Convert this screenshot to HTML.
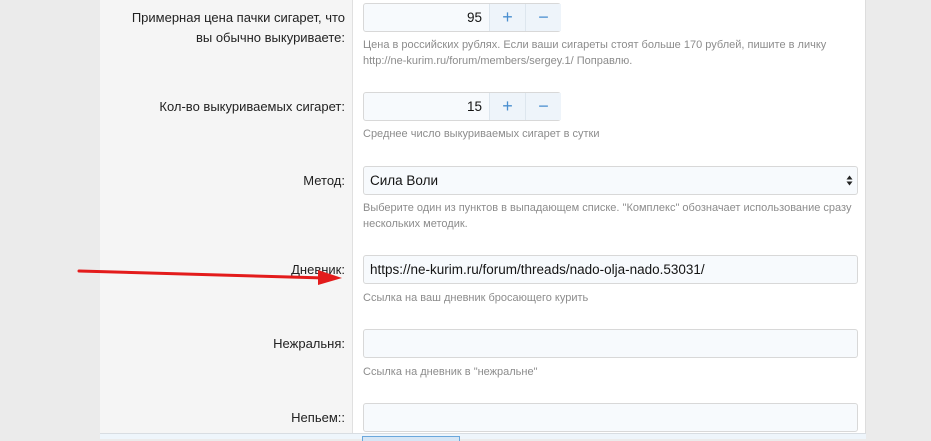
<!DOCTYPE html>
<html><head><meta charset="utf-8"><style>
*{box-sizing:border-box;margin:0;padding:0}
body{width:931px;height:439px;overflow:hidden;background:#ebebeb;font-family:"Liberation Sans",sans-serif;position:relative}
.panel{position:absolute;left:100px;top:0;width:766px;height:439px;background:#fff;border-right:1px solid #ddd}
.lc{position:absolute;left:100px;top:0;width:253px;height:439px;background:#f5f5f5;border-right:1px solid #e0e0e0}
.lbl{position:absolute;right:586px;text-align:right;font-size:13px;color:#222;line-height:20px}
.inp{position:absolute;left:363px;height:29px;border:1px solid #d8d8d8;border-radius:3px;background:#f7fafd;font-size:13.5px;color:#141414;line-height:27px;padding:0 6px}
.hint{position:absolute;left:363px;font-size:11px;color:#8c8c8c;line-height:16px}
.num{width:198px;padding:0}
.num span{position:absolute;left:0;width:125px;text-align:right;padding-right:7px}
.num b{position:absolute;top:0;width:36px;height:27px;border-left:1px solid #dde6ee;text-align:center;font-weight:normal;color:#4a8fd0;font-size:18px;line-height:26px;background:#eef4fa}
.bot{position:absolute;left:100px;top:433px;width:766px;height:6px;background:#eef5fb;border-top:1px solid #d8dde2}
.btn{position:absolute;left:362px;top:436px;width:98px;height:5px;background:#d6e6f5;border:1px solid #6aa7dc;border-bottom:none}
.arr{position:absolute;right:4px;top:8px;width:7px;height:11px}
</style></head><body>
<div class="panel"></div><div class="lc"></div>
<div class="lbl" style="top:8px">Примерная цена пачки сигарет, что<br>вы обычно выкуриваете:</div>
<div class="inp num" style="top:3px"><span>95</span><b style="left:125px">+</b><b style="left:161px">−</b></div>
<div class="hint" style="top:37px">Цена в российских рублях. Если ваши сигареты стоят больше 170 рублей, пишите в личку<br>http://ne-kurim.ru/forum/members/sergey.1/ Поправлю.</div>
<div class="lbl" style="top:97px">Кол-во выкуриваемых сигарет:</div>
<div class="inp num" style="top:92px"><span>15</span><b style="left:125px">+</b><b style="left:161px">−</b></div>
<div class="hint" style="top:126px">Среднее число выкуриваемых сигарет в сутки</div>
<div class="lbl" style="top:171px">Метод:</div>
<div class="inp" style="top:166px;width:495px">Сила Воли<svg class="arr" viewBox="0 0 7 11"><path d="M0.5 4.5 L3.5 0.5 L6.5 4.5Z M0.5 6.5 L3.5 10.5 L6.5 6.5Z" fill="#222"/></svg></div>
<div class="hint" style="top:200px">Выберите один из пунктов в выпадающем списке. "Комплекс" обозначает использование сразу<br>нескольких методик.</div>
<div class="lbl" style="top:260px">Дневник:</div>
<div class="inp" style="top:255px;width:495px">https://ne-kurim.ru/forum/threads/nado-olja-nado.53031/</div>
<div class="hint" style="top:290px">Ссылка на ваш дневник бросающего курить</div>
<div class="lbl" style="top:334px">Нежральня:</div>
<div class="inp" style="top:329px;width:495px"></div>
<div class="hint" style="top:364px">Ссылка на дневник в "нежральне"</div>
<div class="lbl" style="top:408px">Непьем::</div>
<div class="inp" style="top:403px;width:495px"></div>
<div class="bot"></div><div class="btn"></div>
<svg style="position:absolute;left:0;top:0" width="931" height="439"><path d="M79 271 L325 278" stroke="#e31b1b" stroke-width="3" stroke-linecap="round"/><path d="M318 270 L342 278 L318 285 Z" fill="#e31b1b"/></svg>
</body></html>
